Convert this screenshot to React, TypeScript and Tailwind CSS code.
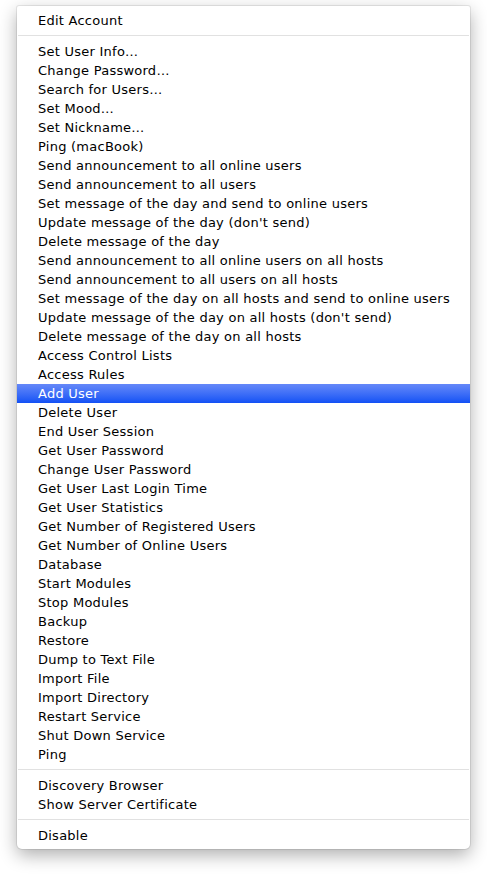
import React from "react";

const group1 = [
  "Set User Info…",
  "Change Password…",
  "Search for Users…",
  "Set Mood…",
  "Set Nickname…",
  "Ping (macBook)",
  "Send announcement to all online users",
  "Send announcement to all users",
  "Set message of the day and send to online users",
  "Update message of the day (don't send)",
  "Delete message of the day",
  "Send announcement to all online users on all hosts",
  "Send announcement to all users on all hosts",
  "Set message of the day on all hosts and send to online users",
  "Update message of the day on all hosts (don't send)",
  "Delete message of the day on all hosts",
  "Access Control Lists",
  "Access Rules",
  "Add User",
  "Delete User",
  "End User Session",
  "Get User Password",
  "Change User Password",
  "Get User Last Login Time",
  "Get User Statistics",
  "Get Number of Registered Users",
  "Get Number of Online Users",
  "Database",
  "Start Modules",
  "Stop Modules",
  "Backup",
  "Restore",
  "Dump to Text File",
  "Import File",
  "Import Directory",
  "Restart Service",
  "Shut Down Service",
  "Ping",
];

function Item({ label, active }: { label: string; active?: boolean }) {
  return (
    <div
      className={
        active
          ? "h-[19px] pl-[21px] flex items-center text-white bg-gradient-to-b from-[#6588f8] to-[#1150f5]"
          : "h-[19px] pl-[21px] flex items-center text-black"
      }
    >
      <span className="leading-none whitespace-nowrap -mt-px">{label}</span>
    </div>
  );
}

function Sep() {
  return (
    <div className="h-[12px] pt-[5px]">
      <div className="h-px bg-[#e1e1e1] mx-px" />
    </div>
  );
}

export default function App() {
  return (
    <div className="w-[487px] h-[876px] bg-white pt-[6px] pl-[17px]">
      <div
        className="w-[453px] h-[843px] bg-white pt-[5px] pb-[4px] rounded-b-[5px] rounded-t-[2px] shadow-[0_6px_18px_rgba(0,0,0,0.32),0_0_0_1px_rgba(0,0,0,0.08)] text-[13px] tracking-[0.25px]"
        style={{ fontFamily: '"DejaVu Sans", sans-serif' }}
      >
        <Item label="Edit Account" />
        <Sep />
        {group1.map((l) => (
          <Item key={l} label={l} active={l === "Add User"} />
        ))}
        <Sep />
        <Item label="Discovery Browser" />
        <Item label="Show Server Certificate" />
        <Sep />
        <Item label="Disable" />
      </div>
    </div>
  );
}
